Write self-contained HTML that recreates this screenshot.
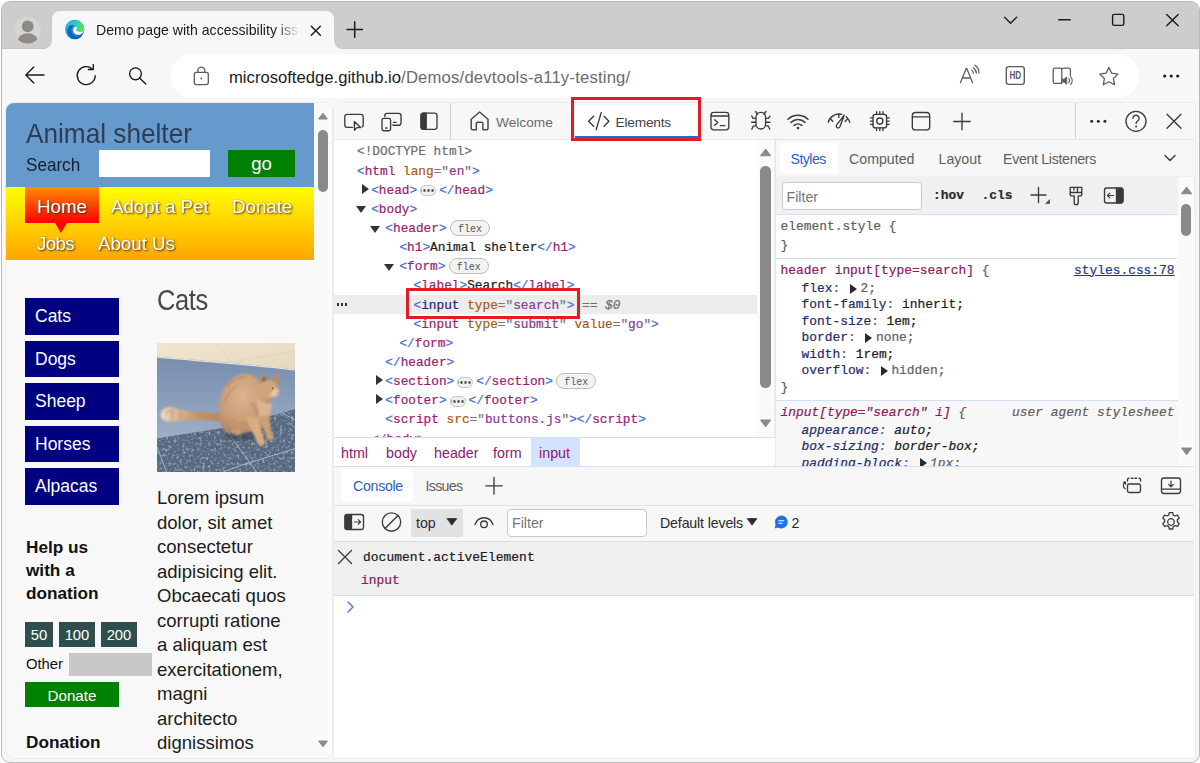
<!DOCTYPE html>
<html lang="en">
<head>
<meta charset="utf-8">
<title>Demo page with accessibility issues</title>
<style>
*{box-sizing:border-box;margin:0;padding:0}
html,body{width:1200px;height:763px;overflow:hidden;background:#fff}
body{font-family:"Liberation Sans",sans-serif;color:#1b1b1b;position:relative}
.abs{position:absolute}
svg{position:absolute;overflow:visible}
.win{position:absolute;left:1px;top:1px;width:1199px;height:761.500px;border:1px solid #b8b8b8;border-radius:9px;overflow:hidden;background:#f7f7f7}
/* coordinates inside .inner are page coordinates */
.inner{position:absolute;left:-2px;top:-2px;width:1200px;height:763px}
.titlebar{position:absolute;left:0;top:0;width:1200px;height:48.600px;background:#cdcdcd;border-bottom:1px solid #c4c4c4}
.tab{position:absolute;left:52px;top:11px;width:282px;height:38px;background:#f7f7f7;border-radius:8px 8px 0 0}
.tab:before,.tab:after{content:"";position:absolute;bottom:0;width:8px;height:8px;background:radial-gradient(circle at 0 0,transparent 7.5px,#f7f7f7 8px)}
.tab:before{left:-8px}
.tab:after{right:-8px;background:radial-gradient(circle at 100% 0,transparent 7.5px,#f7f7f7 8px)}
.tabtitle{position:absolute;left:44px;top:8px;width:205px;height:22px;overflow:hidden;white-space:nowrap;font-size:14.1px;line-height:22px;color:#1b1b1b;-webkit-mask-image:linear-gradient(90deg,#000 180px,transparent 204px);mask-image:linear-gradient(90deg,#000 180px,transparent 204px)}
.pill{position:absolute;left:171px;top:53.500px;width:967.500px;height:44.500px;border-radius:22.250px;background:#fff}
.url{position:absolute;left:229px;top:65.500px;font-size:16.65px;line-height:24px;white-space:nowrap;color:#1b1b1b}
.url span{color:#6b6b6b;letter-spacing:.2px}

.page{position:absolute;left:6px;top:103px;width:326px;height:654.500px;background:#f8f8f8;border-radius:8px;overflow:hidden;box-shadow:0 0 0 1px #ececec}
.page>*{position:absolute}
.page{--x:-7px;--y:-103px}
.page>*{transform:translate(-6px,-103px)}
.phead{left:6px;top:103px;width:308px;height:84px;background:#6699cc}
.h1{left:26px;top:117.500px;font-size:26.2px;line-height:32px;color:#2c3e55;white-space:nowrap}
.slabel{left:26px;top:154px;font-size:17.1px;line-height:24px;color:#15202c;white-space:nowrap}
.sinput{left:99px;top:150px;width:111px;height:27px;background:#fff}
.go{left:228px;top:150px;width:67px;height:27px;background:#008000;color:#fff;text-align:center;font-size:18.6px;line-height:28px}
.nav{left:6px;top:187px;width:308px;height:73.400px;background:linear-gradient(#ffff00,#ffa500)}
.home{left:25px;top:187px;width:74px;height:36px;background:linear-gradient(#ff8c00,#ff0000)}
.homearrow{left:55px;top:223px;width:0;height:0;border-left:6px solid transparent;border-right:6px solid transparent;border-top:10px solid #ff0000}
.nl{color:#fff;font-size:18.7px;line-height:26px;white-space:nowrap;text-shadow:1px 1px 2px rgba(60,30,0,.85),0 0 1px rgba(80,40,0,.5)}
.sb{left:25px;width:94px;height:36.500px;background:#000080;color:#fff;font-size:17.5px;line-height:37px;padding-left:10px;white-space:nowrap}
.sy{display:inline-block;transform-origin:0 78%}
.h2{left:157px;top:284px;font-size:25.5px;line-height:34px;color:#484848;white-space:nowrap;letter-spacing:-.4px}
.para{left:157px;top:486.200px;font-size:18.55px;line-height:24.500px;color:#1c1c1c;white-space:nowrap}
.help{left:26px;top:535.600px;font-weight:bold;font-size:17.2px;line-height:23.4px;color:#111;white-space:nowrap}
.amt{top:622px;height:25px;background:#2f4f4f;color:#fff;text-align:center;font-size:14.8px;line-height:27.500px;overflow:hidden}
.other{left:26px;top:652.800px;font-size:14.8px;line-height:22px;color:#111}
.oinput{left:69px;top:653px;width:83px;height:23px;background:#c8c8c8}
.donate{left:25px;top:682px;width:94px;height:25px;background:#008000;color:#fff;text-align:center;font-size:15.200px;line-height:27px}
.pscroll{left:314px;top:103px;width:18px;height:654px;background:#fafafa}
.pscroll>*{position:absolute}
.pthumb{left:3.600px;top:27px;width:10.400px;height:62px;border-radius:5.200px;background:#8a8a8a}

.dt{position:absolute;left:334px;top:103px;width:861px;height:654.500px;background:#fff;border-radius:8px 0 0 0;overflow:hidden;box-shadow:0 0 0 1px #ececec}
.dt>*{position:absolute;transform:translate(-334px,-103px)}
.dtbar{left:333px;top:103px;width:861px;height:37px;background:#f7f7f7;border-bottom:1px solid #e6e6e6}
.dom{left:333px;top:140px;width:442px;height:297px;background:#fff;overflow:hidden}
.dom>*{position:absolute;transform:translate(-333px,-140px)}
.mono,.row{font-family:"Liberation Mono",monospace;font-size:12.78px}
.row{height:19px;line-height:19px;white-space:pre;color:#1b1b1b;-webkit-text-stroke:.22px}
.row b{font-weight:normal;color:#4a6fd4}
.row i{font-style:normal;color:#9b1e6e}
.row i.sel{color:#1f2d6b}
.row u{text-decoration:none;color:#a85a14}
.row s{text-decoration:none;color:#777}
.row em{font-style:normal;color:#8a3a92}
.row .g{color:#6e6e6e}
.row .eq{color:#6e6e6e;font-style:italic}
.selrow{left:333px;top:294.5px;width:424px;height:19.2px;background:#ececec}
.ar{position:absolute;top:5px;width:0;height:0}
.ar.r{border-top:5px solid transparent;border-bottom:5px solid transparent;border-left:7.500px solid #333;top:3px}
.ar.d{border-left:5px solid transparent;border-right:5px solid transparent;border-top:7px solid #333;top:6.500px}
.badge{display:inline-block;vertical-align:top;margin:1.300px 0 0 3.600px;height:15.600px;line-height:18.600px;padding:0 6.800px;border:1px solid #bdbdbd;border-radius:8px;background:#f3f3f3;color:#555;font-size:10px;-webkit-text-stroke:0}
.dots{display:inline-block;vertical-align:top;margin:4.5px 3px 0 3px;width:16px;height:11px;border:1px solid #c4c4c4;border-radius:5.5px;background:#f0f0f0 radial-gradient(circle,#333 1px,transparent 1.4px) 0 0/4px 9px;background-position:1.5px 0;position:relative}

.ic{position:absolute}
.tabtxt{font-size:13.7px;line-height:20px;white-space:nowrap}
.eltab{left:575px;top:104.600px;width:122.500px;height:34px;background:#fff;border-bottom:3.400px solid #1470d8;border-radius:4px 4px 2px 2px}
.redbox{position:absolute;border:3px solid #e31b23;z-index:5}

.split{left:774px;top:140px;width:2px;height:326px;background:#e4e9f3}
.stabs{left:776px;top:140px;width:419px;height:36px;background:#f7f7f7}
.stab-on{left:779.500px;top:142.500px;width:58px;height:31.500px;background:#fff;border-radius:4px}
.sttxt{font-size:14.200px;line-height:20px;color:#5f5f5f;white-space:nowrap}
.sfilter{left:776px;top:175.500px;width:419px;height:39px;background:#f0f0f0}
.finput{background:#fff;border:1px solid #c9c9c9;border-radius:4px}
.ftxt{font-size:14.200px;line-height:20px;color:#767676}
.srow{font-family:"Liberation Mono",monospace;font-size:12.900px;line-height:17px;height:17px;white-space:pre;color:#1b1b1b;-webkit-text-stroke:.22px}
.srow.bold{font-weight:bold;color:#2a2a2a}
.srow .g{color:#5f5f5f}
.srow .sel{color:#8b1a5e}
.srow .p{color:#1f2d6b}
.srow.it{font-style:italic}
.srow.lnk{color:#1a3a8a;text-decoration:underline}
.tri{display:inline-block;width:0;height:0;border-top:5px solid transparent;border-bottom:5px solid transparent;border-left:7.500px solid #2a2a2a;margin:0 3.500px 0 2px;vertical-align:-1.500px}
.sbody{left:776px;top:214px;width:419px;height:252px;overflow:hidden;background:#fff}
.sbody>*{position:absolute;transform:translate(-776px,-214px)}
.uabg{left:776px;top:400px;width:402px;height:66px;background:#f7f7f7}
.sline{left:776px;width:402px;height:1px;background:#d3dff5}
.vsb{width:16px;background:#fafafa}
.thumb{width:10px;border-radius:5.200px;background:#8a8a8a}

.crumbs{left:333px;top:437px;width:442px;height:29px;background:#fff;border-top:1px solid #d3dff5}
.crsel{left:531px;top:438px;width:49px;height:28px;background:#d3e3fd}
.crtxt{top:442.500px;font-size:14.300px;line-height:20px;color:#8b1a6d;white-space:nowrap}
.ctabs{left:333px;top:465.500px;width:861px;height:40px;background:#f7f7f7;border-top:1px solid #d3dff5}
.ctab-on{left:341px;top:469px;width:72px;height:32.500px;background:#fff;border-radius:4px}
.ctool{left:333px;top:504.500px;width:861px;height:37px;background:#f7f7f7;border-top:1px solid #e3e3e3;border-bottom:1px solid #d3dff5}
.topsel{left:410.500px;top:508.500px;width:52.500px;height:28px;background:#e2e2e2;border-radius:2px}
.cmsg{left:333px;top:541.500px;width:861px;height:54px;background:#efefef;border-bottom:1px solid #cfdcf5}
.seldots{left:336px;top:302.500px;width:11px;height:3px;background:radial-gradient(circle,#333 1.200px,transparent 1.500px) 0 0/4px 3px}
</style>
</head>
<body>
<div class="win"><div class="inner">
  <div class="titlebar">
    <div class="tab"><div class="tabtitle">Demo page with accessibility issues</div></div>
  </div>
  <div class="pill"></div>
  <div class="url">microsoftedge.github.io<span>/Demos/devtools-a11y-testing/</span></div>

  <div class="page">
    <div class="phead"></div>
    <div class="h1"><span class="sy" style="transform:scaleY(1.07)">Animal shelter</span></div>
    <div class="slabel"><span class="sy" style="transform:scaleY(1.1)">Search</span></div>
    <div class="sinput"></div>
    <div class="go">go</div>
    <div class="nav"></div>
    <div class="home"></div>
    <div class="homearrow"></div>
    <div class="nl" style="left:37px;top:194px">Home</div>
    <div class="nl" style="left:111px;top:194px">Adopt a Pet</div>
    <div class="nl" style="left:232px;top:194px">Donate</div>
    <div class="nl" style="left:37px;top:231px;letter-spacing:-.6px">Jobs</div>
    <div class="nl" style="left:98px;top:231px">About Us</div>
    <div class="sb" style="top:298px">Cats</div>
    <div class="sb" style="top:340.500px">Dogs</div>
    <div class="sb" style="top:383px">Sheep</div>
    <div class="sb" style="top:425.500px">Horses</div>
    <div class="sb" style="top:468px">Alpacas</div>
    <div class="h2"><span class="sy" style="transform:scaleY(1.14)">Cats</span></div>
    <svg class="cat" viewBox="0 0 138 129" width="138" height="129" style="left:157px;top:343px;overflow:hidden">
      <defs>
        <linearGradient id="cf" x1="0" y1="0" x2="0" y2="1"><stop offset="0" stop-color="#7389ab"/><stop offset=".35" stop-color="#8499b7"/><stop offset=".75" stop-color="#9fafc6"/><stop offset="1" stop-color="#a6b4c9"/></linearGradient>
        <linearGradient id="cw" x1="0" y1="0" x2="1" y2="1"><stop offset="0" stop-color="#f1e6d0"/><stop offset="1" stop-color="#e6d8bf"/></linearGradient>
        <radialGradient id="cb" cx=".45" cy=".35" r=".75"><stop offset="0" stop-color="#dcb48e"/><stop offset=".6" stop-color="#c99c76"/><stop offset="1" stop-color="#a98062"/></radialGradient>
        <linearGradient id="ct" x1="0" y1="0" x2="1" y2="0"><stop offset="0" stop-color="#f0dcc4"/><stop offset=".3" stop-color="#dcb48c"/><stop offset=".6" stop-color="#c89468"/><stop offset="1" stop-color="#b98560"/></linearGradient>
        <filter id="bl" x="-10%" y="-10%" width="120%" height="120%"><feGaussianBlur stdDeviation=".9"/></filter>
        <filter id="bl2" x="-10%" y="-10%" width="120%" height="120%"><feGaussianBlur stdDeviation="1.600"/></filter>
        <filter id="nz" x="0" y="0" width="100%" height="100%"><feTurbulence type="fractalNoise" baseFrequency=".35" numOctaves="2" seed="4" result="n"/><feColorMatrix in="n" type="matrix" values="0 0 0 0 .62  0 0 0 0 .69  0 0 0 0 .78  0 0 0 2.200 -1.050"/><feComposite in2="SourceGraphic" operator="in"/></filter>
      </defs>
      <rect width="138" height="129" fill="url(#cf)"/>
      <path d="M0 0H138V26.500C100 21.500 50 18 0 13.500z" fill="url(#cw)"/>
      <path d="M0 14.200C50 18.600 100 22.200 138 27" stroke="#fbf4e6" stroke-width="1.200" fill="none" opacity=".8"/>
      <path d="M60 0l14 19M138 8L75 19" stroke="#d9ccb4" stroke-width=".7" fill="none" opacity=".8"/>
      <path d="M0 95.500L68 84.500 100 77 138 66V129H0z" fill="#56687f"/>
      <path d="M0 95.500L68 84.500 100 77 138 66V129H0z" fill="#fff" filter="url(#nz)" opacity=".75"/>
      <g stroke="#b4bfce" stroke-width="1" fill="none" opacity=".85"><path d="M68.500 86L99.500 129M138 105.500L82 123 66 129M0 103.500L9.500 129M124.500 69.500L138 77"/></g>
      <ellipse cx="84" cy="93" rx="17" ry="4.500" fill="#2e3a4c" opacity=".6" filter="url(#bl2)"/>
      <g filter="url(#bl)">
        <path d="M62 70C48 70.500 30 69 16 64.500 9 62.500 3.500 67 3.500 72.500 4 78 11 79.500 20 78 34 75.500 50 77 63 78z" fill="url(#ct)"/>
        <path d="M62.500 62C64 48 72 33 86 31 94 30 100 34 104 40 110 48 114 58 113 68 112 78 106 86 96 88 88 90 80 92 72 90 64 88 61 78 62.500 62z" fill="url(#cb)"/>
        <path d="M89 74C92 82 97 92 100.500 100 103 104.500 109 103 108 99 105 91 103 82 102 74z" fill="#d8ad82"/>
        <path d="M103 74C105 82 108 90 110.500 95.500 113 99 118 97 116.500 93.500 113.500 87 112.500 80 112 72z" fill="#cfa075"/>
        <path d="M74 88c3 5 9 6 11 2l-3-6z" fill="#c99a70"/>
        <ellipse cx="111.500" cy="46.500" rx="10.200" ry="9.600" fill="#d2a47c"/><path d="M100 54c4 6 10 8 15 6l-2 12-12 2z" fill="#d9b590"/>
        <path d="M102.500 41L105.500 30.500 112 37zM114 37L122.500 28.500 121.500 41z" fill="#c08a60"/>
        <path d="M105.300 38.500L106.300 33.200 109.500 37z" fill="#6a5148"/>
        <path d="M112 52c3 2 7 2 9.500-.5l.5-5-4-1z" fill="#e6c9a8"/>
        <path d="M70 45c4-7 11-11 19-11M68 58c2-6 6-12 12-15M75 76c4 4 10 5 15 3M94 60c4 3 7 8 7 14" stroke="#b07a50" stroke-width="1.600" fill="none" opacity=".6"/>
        <path d="M8 70c3-2 6-2 9 0M14 66c2 3 2 8 0 11M22 68c2 3 2 6 0 9" stroke="#c9966a" stroke-width="1.800" fill="none" opacity=".7"/>
      </g>
      <circle cx="115.800" cy="45.200" r=".8" fill="#4a3a30"/><circle cx="120.300" cy="50.300" r=".6" fill="#b06a60"/>
    </svg>
    <div class="para">Lorem ipsum<br>dolor, sit amet<br>consectetur<br>adipisicing elit.<br>Obcaecati quos<br>corrupti ratione<br>a aliquam est<br>exercitationem,<br>magni<br>architecto<br>dignissimos</div>
    <div class="help">Help us<br>with a<br>donation</div>
    <div class="amt" style="left:25px;width:28px">50</div>
    <div class="amt" style="left:59px;width:36px">100</div>
    <div class="amt" style="left:101px;width:36px">200</div>
    <div class="other">Other</div>
    <div class="oinput"></div>
    <div class="donate">Donate</div>
    <div class="help" style="top:731px">Donation</div>
    <div class="pscroll">
      <div class="pthumb"></div>
      <svg width="12" height="8" style="left:3px;top:9px" viewBox="0 0 12 8"><path d="M6 1.200L10.400 7H1.600z" fill="#8a8a8a" stroke="#8a8a8a" stroke-width="1" stroke-linejoin="round"/></svg>
      <svg width="12" height="8" style="left:3px;top:637px" viewBox="0 0 12 8"><path d="M6 6.800L10.400 1H1.600z" fill="#8a8a8a" stroke="#8a8a8a" stroke-width="1" stroke-linejoin="round"/></svg>
    </div>
  </div>

  <svg class="ic" style="left:0;top:0" width="1200" height="100" viewBox="0 0 1200 100" fill="none" stroke="#1b1b1b" stroke-width="1.400" stroke-linecap="round" stroke-linejoin="round">
    <defs>
      <linearGradient id="eg1" x1="0" y1="0" x2="1" y2="1"><stop offset="0" stop-color="#35c1f1"/><stop offset=".55" stop-color="#1b8fdc"/><stop offset="1" stop-color="#0c59a4"/></linearGradient>
      <linearGradient id="eg2" x1="0" y1=".2" x2="1" y2=".6"><stop offset="0" stop-color="#27b3e6"/><stop offset=".45" stop-color="#2fc4cf"/><stop offset=".8" stop-color="#4fd878"/><stop offset="1" stop-color="#6fe060"/></linearGradient>
      <clipPath id="pc"><circle cx="27.700" cy="29.900" r="13.500"/></clipPath>
    </defs>
    <!-- profile -->
    <circle cx="27.700" cy="29.900" r="13.500" fill="#d7d5d2" stroke="#d0cecb" stroke-width=".8"/>
    <g clip-path="url(#pc)" fill="#8d8a87" stroke="none"><circle cx="27.700" cy="26.300" r="5.900"/><ellipse cx="27.700" cy="39.600" rx="9.700" ry="6.300"/></g>
    <!-- edge logo -->
    <g stroke="none">
      <circle cx="74.700" cy="29.600" r="9.600" fill="url(#eg1)"/>
      <path d="M65.300 27.500a9.600 9.600 0 0 1 19 1.200c0 3.400-2.600 5-5.200 5-2.200 0-3.400-1-3.400-2.300 0-1.100.9-1.500.9-3 0-1.900-1.900-3.600-4.600-3.600-3.200 0-6 2-6.700 2.700z" fill="url(#eg2)"/>
      <path d="M72 24.800c-2.900.6-4.600 3.200-4.600 6.100 0 4.400 3.700 8 8 8 2.400 0 4.400-.7 6-2.100-1.600.6-3.400.7-5 .1-3-1-4.900-3.800-4.900-6.900 0-1.500.6-2.800 1.400-3.600.5-.6.400-1.400-.9-1.600z" fill="#0f5cab" opacity=".85"/>
      <path d="M74.500 27.200c-.8.700-1.300 1.800-1.300 3 0 2.600 2.200 4.500 4.900 4.500 1.800 0 3.600-.8 4.900-2.300.6-.7.300-1.200-.4-.9-.9.400-1.800.5-2.700.5-2.300 0-3.600-.9-3.600-2.200 0-.9.600-1.400.6-2.200 0-.9-1.300-1.300-2.400-.4z" fill="#fff"/>
    </g>
    <!-- tab close -->
    <path d="M311.300 26.300l9 9M320.300 26.300l-9 9" stroke-width="1.500"/>
    <!-- new tab -->
    <path d="M354.700 21.800v15.400M347 29.500h15.400" stroke-width="1.500"/>
    <!-- window controls -->
    <path d="M1004.600 17.200l6 6 6-6" stroke-width="1.400"/>
    <path d="M1058.600 19.700h11.600" stroke-width="1.500"/>
    <rect x="1112.600" y="14.400" width="11.200" height="11" rx="1.600" stroke-width="1.400"/>
    <path d="M1166.700 14.400l11.500 11.300M1178.200 14.400l-11.500 11.300" stroke-width="1.400"/>
    <!-- back -->
    <path d="M44 75H26M33.800 67l-8 8 8 8"/>
    <!-- refresh -->
    <path d="M95.200 75.600a9 9 0 1 1-3-6.700M93.300 64.600v4.900h-4.900"/>
    <!-- search -->
    <circle cx="135.500" cy="73.800" r="5.900"/><path d="M139.800 78.200l6 5.800"/>
    <!-- lock -->
    <g stroke="#5c5c5c" stroke-width="1.300" transform="translate(0 1)"><rect x="194.300" y="71.300" width="14" height="12.300" rx="2"/><path d="M197.800 71.200v-1.600a3.500 3.500 0 0 1 7 0v1.600"/><circle cx="201.300" cy="77.500" r=".9" fill="#5c5c5c" stroke="none"/></g>
    <!-- read aloud -->
    <g stroke="#5c5c5c" stroke-width="1.300"><path d="M960.500 82.600l5.700-14.200h.6l5.700 14.200M962.600 78h7.800M971.800 70.300a3.400 3.400 0 0 1 1.600 2.900M973.300 67.700a6.400 6.400 0 0 1 3 5.400M975 65.300a9.200 9.200 0 0 1 4 7.600" /></g>
    <!-- HD -->
    <g stroke="#5c5c5c" stroke-width="1.400"><rect x="1006.300" y="66.600" width="18" height="17.800" rx="2.600"/></g>
    <text x="1015.300" y="79.400" text-anchor="middle" font-family="Liberation Sans, sans-serif" font-size="10" font-weight="bold" fill="#5c5c5c" stroke="none" textLength="11.800" lengthAdjust="spacingAndGlyphs">HD</text>
    <!-- immersive reader -->
    <g stroke="#5c5c5c" stroke-width="1.300"><path d="M1061.500 83.300h-6.700a1.600 1.600 0 0 1-1.600-1.600v-12a1.600 1.600 0 0 1 1.600-1.600h5.400a1.600 1.600 0 0 1 1.600 1.600v13.600M1061.800 69.700a1.600 1.600 0 0 1 1.600-1.600h5.400a1.600 1.600 0 0 1 1.600 1.600v5.600"/><path d="M1062.300 79.200h1.700l2.700-2.300v7.500l-2.700-2.300h-1.700z" fill="#5c5c5c" stroke-width=".8"/><path d="M1068.600 78.300a3 3 0 0 1 0 4.600M1070.600 76.700a5.400 5.400 0 0 1 0 7.800" stroke-width="1.100"/></g>
    <!-- star -->
    <path d="M1108.900 67.400l2.800 5.800 6.300.9-4.600 4.400 1.100 6.300-5.600-3-5.600 3 1.100-6.300-4.600-4.400 6.300-.9z" stroke="#5c5c5c" stroke-width="1.300"/>
    <!-- more -->
    <g fill="#1b1b1b" stroke="none"><circle cx="1164.700" cy="76" r="1.600"/><circle cx="1171.200" cy="76" r="1.600"/><circle cx="1177.700" cy="76" r="1.600"/></g>
  </svg>
  <!--PAGE-->

  <div class="dt">
    <div class="dtbar"></div>
    <div class="dom">
      <div class="selrow"></div>

      <div class="vsb" style="left:757px;top:140px;height:297px"></div>
      <div class="thumb" style="left:760.300px;top:166px;height:222px;width:10.500px"></div>
      <svg class="ic" style="left:759.200px;top:147.600px" width="13.200" height="8.800" viewBox="0 0 12 8"><path d="M6 1.200L10.400 7H1.600z" fill="#8a8a8a" stroke="#8a8a8a" stroke-width="1" stroke-linejoin="round"/></svg>
      <svg class="ic" style="left:759.200px;top:418.600px" width="13.200" height="8.800" viewBox="0 0 12 8"><path d="M6 6.800L10.400 1H1.600z" fill="#8a8a8a" stroke="#8a8a8a" stroke-width="1" stroke-linejoin="round"/></svg>
      <div class="seldots"></div>
      <div class="row" style="left:357px;top:142.4px"><span class="g">&lt;!DOCTYPE html&gt;</span></div>
      <div class="row" style="left:357px;top:161.5px"><b>&lt;</b><i>html</i> <u>lang</u><s>="</s><em>en</em><s>"</s><b>&gt;</b></div>
      <div class="row" style="left:371.2px;top:180.7px"><span class="ar r" style="left:-9px"></span><b>&lt;</b><i>head</i><b>&gt;</b><span class="dots"></span><b>&lt;/</b><i>head</i><b>&gt;</b></div>
      <div class="row" style="left:371.2px;top:199.8px"><span class="ar d" style="left:-15px"></span><b>&lt;</b><i>body</i><b>&gt;</b></div>
      <div class="row" style="left:385.3px;top:219.0px"><span class="ar d" style="left:-15px"></span><b>&lt;</b><i>header</i><b>&gt;</b><span class="badge">flex</span></div>
      <div class="row" style="left:399.4px;top:238.1px"><b>&lt;</b><i>h1</i><b>&gt;</b>Animal shelter<b>&lt;/</b><i>h1</i><b>&gt;</b></div>
      <div class="row" style="left:399.4px;top:257.2px"><span class="ar d" style="left:-15px"></span><b>&lt;</b><i>form</i><b>&gt;</b><span class="badge">flex</span></div>
      <div class="row" style="left:413.5px;top:276.4px"><b>&lt;</b><i>label</i><b>&gt;</b>Search<b>&lt;/</b><i>label</i><b>&gt;</b></div>
      <div class="row" style="left:413.5px;top:295.5px"><b>&lt;</b><i class="sel">input</i> <u>type</u><s>="</s><em>search</em><s>"</s><b>&gt;</b><span class="eq"> == $0</span></div>
      <div class="row" style="left:413.5px;top:314.7px"><b>&lt;</b><i>input</i> <u>type</u><s>="</s><em>submit</em><s>"</s> <u>value</u><s>="</s><em>go</em><s>"</s><b>&gt;</b></div>
      <div class="row" style="left:399.4px;top:333.8px"><b>&lt;/</b><i>form</i><b>&gt;</b></div>
      <div class="row" style="left:385.3px;top:352.9px"><b>&lt;/</b><i>header</i><b>&gt;</b></div>
      <div class="row" style="left:385.3px;top:372.1px"><span class="ar r" style="left:-9px"></span><b>&lt;</b><i>section</i><b>&gt;</b><span class="dots"></span><b>&lt;/</b><i>section</i><b>&gt;</b><span class="badge">flex</span></div>
      <div class="row" style="left:385.3px;top:391.2px"><span class="ar r" style="left:-9px"></span><b>&lt;</b><i>footer</i><b>&gt;</b><span class="dots"></span><b>&lt;/</b><i>footer</i><b>&gt;</b></div>
      <div class="row" style="left:385.3px;top:410.4px"><b>&lt;</b><i>script</i> <u>src</u><s>="</s><em>buttons.js</em><s>"</s><b>&gt;&lt;/</b><i>script</i><b>&gt;</b></div>
      <div class="row" style="left:371.2px;top:429.5px"><b>&lt;/</b><i>body</i><b>&gt;</b></div>
    </div>

    <div class="eltab"></div>
    <svg class="ic" style="left:333px;top:103px" width="861" height="37" viewBox="333 103 861 37" fill="none" stroke="#3a3a3a" stroke-width="1.35" stroke-linecap="round" stroke-linejoin="round">
      <!-- inspect -->
      <path d="M352.5 127.3H347a2.2 2.2 0 0 1-2.2-2.2v-8.5a2.2 2.2 0 0 1 2.2-2.2h14a2.2 2.2 0 0 1 2.2 2.2v8.5c0 .8-.4 1.5-1 1.9"/>
      <path d="M354.3 121.6l.2 8.6 2.4-2.6h3.7z"/>
      <!-- device -->
      <path d="M384.8 116.5v-1a2.2 2.2 0 0 1 2.2-2.2h11.8a2.2 2.2 0 0 1 2.2 2.2v7.6a2.2 2.2 0 0 1-2.2 2.2h-6"/>
      <rect x="382" y="118.4" width="8.6" height="12.3" rx="1.8"/>
      <path d="M385.6 128h1.4M393.5 122.3h2.6"/>
      <!-- dock -->
      <rect x="421" y="113.1" width="16" height="16.2" rx="2.6"/>
      <path d="M423.4 113.2h2.8v16h-2.8a2.4 2.4 0 0 1-2.3-2.4v-11.2a2.4 2.4 0 0 1 2.3-2.4z" fill="#3a3a3a"/>
      <!-- sep -->
      <path d="M450.5 103.5v35" stroke="#cfcfcf" stroke-width="1"/>
      <!-- home -->
      <path d="M471.2 119.3l8.4-7.3 8.4 7.3v9a1.5 1.5 0 0 1-1.5 1.5h-3.6v-6.2a1.3 1.3 0 0 0-1.3-1.3h-4a1.3 1.3 0 0 0-1.3 1.3v6.2h-3.6a1.5 1.5 0 0 1-1.5-1.5z" stroke="#4a4a4a" stroke-width="1.5"/>
      <!-- elements icon </> -->
      <path d="M593.6 116.2l-4.9 5 4.9 5M604 116.2l4.9 5-4.9 5M601.2 112.6l-5 17" stroke-width="1.4"/>
      <!-- console -->
      <rect x="711" y="112.3" width="17.8" height="17.6" rx="2.8"/>
      <path d="M711.2 116h17.4M714.6 119.7l3.2 2.8-3.2 2.8M720.3 125.6h4.6"/>
      <!-- bug -->
      <path d="M756 117.2a4.8 4.8 0 0 1 9.6 0v7a4.8 4.8 0 0 1-9.6 0zM757.6 114.3l-2-2.8M764 114.3l2-2.8M756 118.4h-2.8l-1.6-2.4M765.6 118.4h2.8l1.6-2.4M756 122.2h-4.4M765.6 122.2h4.4M756 125.6l-2.8.6-1.4 3M765.6 125.6l2.8.6 1.4 3"/>
      <!-- wifi -->
      <path d="M788 119.2a14.5 14.5 0 0 1 20 0M791 122.4a10.2 10.2 0 0 1 14 0M794.2 125.4a5.6 5.600 0 0 1 7.600 0" stroke-width="1.5"/>
      <circle cx="798" cy="128" r="1.3" fill="#3a3a3a" stroke="none"/>
      <!-- performance -->
      <path d="M828.200 122.300A11.200 11.200 0 0 1 841.800 114.400M846.200 116.700A11.200 11.200 0 0 1 849.700 122.300M830.800 119.300l1.900 1.900M838.800 114.200v3.200M847 119.500l-1.900 1.900"/>
      <path d="M844.200 115.200l-7.500 9.600a1.900 1.900 0 1 0 3.200 2z"/>
      <!-- memory chip -->
      <rect x="873" y="114.300" width="13.600" height="13.600" rx="2.400"/>
      <circle cx="879.800" cy="121.100" r="3.100"/>
      <path d="M876.600 114.300v-2.600M879.800 114.300v-2.600M883 114.300v-2.600M876.600 130.500v-2.600M879.800 130.500v-2.600M883 130.500v-2.600M873 117.900h-2.600M873 121.100h-2.600M873 124.300h-2.600M889.200 117.900h-2.600M889.200 121.100h-2.600M889.200 124.300h-2.600"/>
      <!-- application -->
      <rect x="912.300" y="112.500" width="17.400" height="17.400" rx="3.200"/>
      <path d="M912.500 116.800h17"/>
      <!-- plus -->
      <path d="M962 113.200v16.600M953.700 121.500h16.600"/>
      <!-- sep -->
      <path d="M1075.500 103.500v35" stroke="#cfcfcf" stroke-width="1"/>
      <!-- more -->
      <g fill="#2a2a2a" stroke="none"><circle cx="1091.700" cy="121.300" r="1.500"/><circle cx="1098.300" cy="121.300" r="1.500"/><circle cx="1104.900" cy="121.300" r="1.500"/></g>
      <!-- help -->
      <circle cx="1136" cy="121.300" r="10"/>
      <path d="M1132.900 118.300a3.100 3.100 0 1 1 4.700 2.700c-1 .6-1.500 1.200-1.500 2.400"/>
      <circle cx="1136.100" cy="126.600" r="1" fill="#3a3a3a" stroke="none"/>
      <!-- close -->
      <path d="M1167 114.300l14 14M1181 114.300l-14 14"/>
    </svg>
    <div class="tabtxt" style="left:496px;top:113px;color:#6b6b6b">Welcome</div>
    <div class="tabtxt" style="left:615.500px;top:113px;color:#444;letter-spacing:-.2px">Elements</div>


    <div class="split"></div>
    <div class="stabs"></div>
    <div class="stab-on"></div>
    <div class="sttxt" style="left:790.500px;top:149px;color:#2b5fcb;letter-spacing:-.55px">Styles</div>
    <div class="sttxt" style="left:849px;top:149px">Computed</div>
    <div class="sttxt" style="left:938.500px;top:149px">Layout</div>
    <div class="sttxt" style="left:1003px;top:149px;letter-spacing:-.32px">Event Listeners</div>
    <svg class="ic" style="left:1163px;top:153px" width="14" height="10" viewBox="0 0 14 10" fill="none" stroke="#3a3a3a" stroke-width="1.4" stroke-linecap="round" stroke-linejoin="round"><path d="M2 2.500l5 5 5-5"/></svg>
    <div class="sfilter"></div>
    <div class="finput" style="left:781.500px;top:181.500px;width:140.500px;height:28px"></div>
    <div class="ftxt" style="left:786.500px;top:186.500px">Filter</div>
    <div class="srow bold" style="left:933px;top:187.300px">:hov</div>
    <div class="srow bold" style="left:981.500px;top:187.300px">.cls</div>
    <svg class="ic" style="left:776.300px;top:178px" width="418" height="37" viewBox="776 177 418 37" fill="none" stroke="#3a3a3a" stroke-width="1.35" stroke-linecap="round" stroke-linejoin="round">
      <path d="M1038.500 186.500v15M1031 194h15"/>
      <path d="M1049.500 199v3.500h-3.500z" fill="#3a3a3a" stroke-width=".6"/>
      <path d="M1070.200 186.300h11.600v7.200a1.400 1.400 0 0 1-1.400 1.400h-2.200v6.800a2 2 0 0 1-4 0v-6.800h-2.600a1.400 1.400 0 0 1-1.400-1.400zM1074 186.500v2.600M1077.500 186.500v3.800M1070.400 191.500h11.200"/>
      <rect x="1104.500" y="187" width="18.500" height="15" rx="2.200"/>
      <path d="M1116.500 187.200h4.300a2.100 2.100 0 0 1 2.100 2.100v10.400a2.100 2.100 0 0 1-2.100 2.100h-4.300z" fill="#3a3a3a"/>
      <path d="M1113.600 194.500h-6M1109.800 192.200l-2.400 2.300 2.400 2.300" stroke-width="1.100"/>
    </svg>
    <div class="sbody">
      <div class="uabg"></div>
      <div class="sline" style="top:214px"></div>
      <div class="sline" style="top:258px"></div>
      <div class="sline" style="top:399.500px"></div>
      <div class="srow" style="left:780.500px;top:218px"><span class="g">element.style {</span></div>
      <div class="srow" style="left:780.500px;top:237px"><span class="g">}</span></div>
      <div class="srow" style="left:780.500px;top:261.500px"><span class="sel">header input[type=search]</span><span class="g"> {</span></div>
      <div class="srow lnk" style="left:1074px;top:261.500px">styles.css:78</div>
      <div class="srow" style="left:801.500px;top:280px"><span class="p">flex</span><span class="g">: </span><span class="tri"></span><span class="g">2;</span></div>
      <div class="srow" style="left:801.500px;top:296.400px"><span class="p">font-family</span><span class="g">: </span>inherit;</div>
      <div class="srow" style="left:801.500px;top:312.800px"><span class="p">font-size</span><span class="g">: </span>1em;</div>
      <div class="srow" style="left:801.500px;top:329.200px"><span class="p">border</span><span class="g">: </span><span class="tri"></span><span class="g">none;</span></div>
      <div class="srow" style="left:801.500px;top:345.600px"><span class="p">width</span><span class="g">: </span>1rem;</div>
      <div class="srow" style="left:801.500px;top:362px"><span class="p">overflow</span><span class="g">: </span><span class="tri"></span><span class="g">hidden;</span></div>
      <div class="srow" style="left:780.500px;top:378.600px"><span class="g">}</span></div>
      <div class="srow it" style="left:780.500px;top:403.500px"><span class="sel">input[type="search" i]</span><span class="g"> {</span></div>
      <div class="srow it" style="left:1012px;top:403.500px"><span class="g">user agent stylesheet</span></div>
      <div class="srow it" style="left:801.500px;top:421.500px"><span class="p">appearance</span><span class="g">: </span>auto;</div>
      <div class="srow it" style="left:801.500px;top:438.200px"><span class="p">box-sizing</span><span class="g">: </span>border-box;</div>
      <div class="srow it" style="left:801.500px;top:454.800px"><span class="p">padding-block</span><span class="g">: </span><span class="tri"></span><span class="g">1px;</span></div>
    </div>
      <div class="vsb" style="left:1178px;top:177px;height:288px"></div>
      <div class="thumb" style="left:1181.100px;top:203.800px;height:32px"></div>
      <svg class="ic" style="left:1179.600px;top:186px" width="13.200" height="8.800" viewBox="0 0 12 8"><path d="M6 1.200L10.400 7H1.600z" fill="#8a8a8a" stroke="#8a8a8a" stroke-width="1" stroke-linejoin="round"/></svg>
      <svg class="ic" style="left:1179.600px;top:447px" width="13.200" height="8.800" viewBox="0 0 12 8"><path d="M6 6.800L10.400 1H1.600z" fill="#8a8a8a" stroke="#8a8a8a" stroke-width="1" stroke-linejoin="round"/></svg>


    <div class="crumbs"></div>
    <div class="crsel"></div>
    <div class="crtxt" style="left:341px">html</div>
    <div class="crtxt" style="left:386px">body</div>
    <div class="crtxt" style="left:434px">header</div>
    <div class="crtxt" style="left:493px">form</div>
    <div class="crtxt" style="left:539px">input</div>


    <div class="ctabs"></div>
    <div class="ctab-on"></div>
    <div class="sttxt" style="left:353px;top:476px;color:#2b5fcb;letter-spacing:-.3px">Console</div>
    <div class="sttxt" style="left:425.500px;top:476px;letter-spacing:-.7px">Issues</div>
    <div class="ctool"></div>
    <div class="topsel"></div>
    <div class="sttxt" style="left:416px;top:512.500px;color:#2a2a2a">top</div>
    <div class="finput" style="left:507px;top:508.500px;width:140px;height:28px"></div>
    <div class="ftxt" style="left:512px;top:513px">Filter</div>
    <div class="sttxt" style="left:660px;top:512.500px;color:#2a2a2a;letter-spacing:-.15px">Default levels</div>
    <div class="sttxt" style="left:791.500px;top:512.500px;color:#2a2a2a">2</div>
    <div class="cmsg"></div>
    <div class="srow" style="left:363px;top:548.500px;letter-spacing:.07px">document.activeElement</div>
    <div class="srow" style="left:361px;top:571.500px;color:#8b1a5e">input</div>
    <svg class="ic" style="left:333px;top:467px" width="861" height="160" viewBox="333 467 861 160" fill="none" stroke="#3a3a3a" stroke-width="1.35" stroke-linecap="round" stroke-linejoin="round">
      <!-- plus -->
      <path d="M494 477.500v16.500M485.700 485.800h16.600"/>
      <!-- drawer icons -->
      <path d="M1127.500 481v-1.200a1.600 1.600 0 0 1 1.600-1.600" /><path d="M1131.500 478.200h6" stroke-dasharray="1.600 1.900"/><path d="M1139 478.200a1.600 1.600 0 0 1 1.600 1.600v1.200"/>
      <rect x="1127.500" y="484" width="13" height="8.500" rx="1.800"/>
      <path d="M1125.300 482.400a3.600 3.600 0 0 0 0 6.400M1123.600 482.200h2v2" stroke-width="1.200"/>
      <rect x="1161.500" y="478" width="19" height="15.500" rx="2.400"/>
      <path d="M1161.700 489.200h18.600M1171 481v5.600M1168.600 484.400l2.400 2.400 2.400-2.400" stroke-width="1.200"/>
      <!-- sidebar toggle -->
      <rect x="345" y="514.500" width="18.500" height="15" rx="2.200"/>
      <path d="M351.500 514.700h-4.300a2.100 2.100 0 0 0-2.100 2.100v10.400a2.100 2.100 0 0 0 2.100 2.100h4.300z" fill="#3a3a3a"/>
      <path d="M354.400 522h6M358.200 519.700l2.400 2.300-2.400 2.300" stroke-width="1.100"/>
      <!-- clear -->
      <circle cx="391.500" cy="522" r="9.200"/><path d="M385 528.500l13-13"/>
      <!-- top caret -->
      <path d="M447.300 518.600h9.400l-4.700 6.300z" fill="#2a2a2a" stroke="#2a2a2a" stroke-width=".8"/>
      <!-- eye -->
      <path d="M475 524.500c1.600-4.300 5-6.800 9-6.800s7.400 2.500 9 6.800"/><circle cx="484" cy="524.300" r="3.300"/>
      <!-- levels caret -->
      <path d="M747.500 518.600h9.400l-4.700 6.300z" fill="#2a2a2a" stroke="#2a2a2a" stroke-width=".8"/>
      <!-- msg bubble -->
      <path d="M781.300 516a6 6 0 1 1-5.300 8.800l-1 3.200 3.300-1a6 6 0 0 1-3-5 6 6 0 0 1 6-6z" fill="#1a73e8" stroke="#1a73e8" stroke-width=".8"/>
      <path d="M778.800 520.700h5M778.800 523.300h3.200" stroke="#fff" stroke-width="1.100"/>
      <!-- gear -->
      <g transform="translate(1171 522)" stroke-width="1.300">
        <circle r="3.300"/>
        <path d="M-1.700-9.400h3.400l.6 2.500 1.700.9 2.400-.9 1.800 2.900-1.800 1.800v2l1.800 1.800-1.800 2.900-2.400-.9-1.700.9-.6 2.500h-3.400l-.6-2.500-1.700-.9-2.400.9-1.800-2.900 1.800-1.800v-2l-1.800-1.800 1.800-2.900 2.400.9 1.700-.9z"/>
      </g>
      <!-- X of message -->
      <path d="M338.500 550.500l13 13M351.500 550.500l-13 13" stroke-width="1.250"/>
      <!-- prompt -->
      <path d="M348 602l5 5-5 5" stroke="#4a7fe0" stroke-width="1.500"/>
    </svg>

  </div>
  <div class="redbox" style="left:571px;top:97px;width:130px;height:44px"></div>
  <div class="redbox" style="left:405.500px;top:288px;width:174.500px;height:30.500px"></div>
  <!--DEVTOOLS-->
</div></div>
</body>
</html>
